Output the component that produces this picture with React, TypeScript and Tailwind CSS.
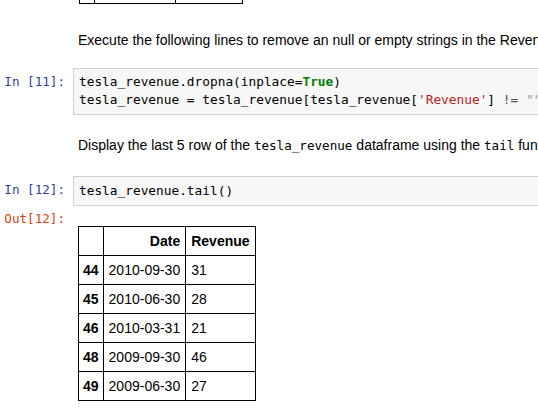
import React from "react";

const mono = "font-['DejaVu_Sans_Mono','Liberation_Mono',monospace]";

const rows = [
  ["44", "2010-09-30", "31"],
  ["45", "2010-06-30", "28"],
  ["46", "2010-03-31", "21"],
  ["48", "2009-09-30", "46"],
  ["49", "2009-06-30", "27"],
];

function InPrompt({ n }: { n: number }) {
  return (
    <div className={`${mono} w-[73px] shrink-0 pr-[8px] pt-[5px] text-right text-[12.6px] leading-[18px] text-[#303f9f]`}>
      In [{n}]:
    </div>
  );
}

export default function App() {
  return (
    <div className="h-[417px] w-[538px] overflow-hidden bg-white font-['Liberation_Sans',Arial,sans-serif] text-[14px] text-black">
      {/* tail end of the previous output table */}
      <div className="ml-[79px] flex h-[4px] w-[164px] border-x border-b border-black">
        <div className="w-[15px] border-r border-black" />
        <div className="w-[81px] border-r border-black" />
        <div className="flex-1" />
      </div>

      <p className="mt-[26px] whitespace-nowrap pl-[78px] leading-[20px]">
        Execute the following lines to remove an null or empty strings in the Revenue column.
      </p>

      <div className="mt-[18px] flex">
        <InPrompt n={11} />
        <div className={`${mono} flex-1 whitespace-pre border border-r-0 border-[#cfcfcf] bg-[#f7f7f7] pb-[5px] pl-[5px] pt-[4px] text-[12.8px] leading-[18px] text-black`}>
          <div>
            tesla_revenue.dropna(inplace=<span className="font-bold text-[#008000]">True</span>)
          </div>
          <div>
            tesla_revenue = tesla_revenue[tesla_revenue[<span className="text-[#ba2121]">'Revenue'</span>] <span className="text-[#555]">!=</span> <span className="text-[#999]">""</span>]
          </div>
        </div>
      </div>

      <p className="mt-[20px] whitespace-nowrap pl-[78px] leading-[20px]">
        Display the last 5 row of the <code className={`${mono} text-[12.6px]`}>tesla_revenue</code> dataframe using the{" "}
        <code className={`${mono} text-[12.6px]`}>tail</code> function.
      </p>

      <div className="mt-[20px] flex">
        <InPrompt n={12} />
        <div className={`${mono} flex-1 whitespace-pre border border-r-0 border-[#cfcfcf] bg-[#f7f7f7] pb-[5px] pl-[5px] pt-[5px] text-[12.8px] leading-[18px] text-black`}>
          tesla_revenue.tail()
        </div>
      </div>

      <div className="mt-[4px] flex">
        <div className={`${mono} w-[73px] shrink-0 pr-[8px] text-right text-[12.6px] leading-[18px] text-[#d84315]`}>
          Out[12]:
        </div>
        <div className="pl-[5px] pt-[16px]">
          <table className="border-collapse text-[14px]">
            <thead>
              <tr className="h-[29px]">
                <th className="border border-black px-[5px]"></th>
                <th className="border border-black px-[5px] text-right font-bold">Date</th>
                <th className="border border-black px-[5px] text-left font-bold">Revenue</th>
              </tr>
            </thead>
            <tbody>
              {rows.map(([i, d, r]) => (
                <tr key={i} className="h-[29px]">
                  <th className="border border-black px-[4px] text-right font-bold">{i}</th>
                  <td className="border border-black px-[5px] text-left">{d}</td>
                  <td className="border border-black px-[5px] text-left">{r}</td>
                </tr>
              ))}
            </tbody>
          </table>
        </div>
      </div>
    </div>
  );
}
